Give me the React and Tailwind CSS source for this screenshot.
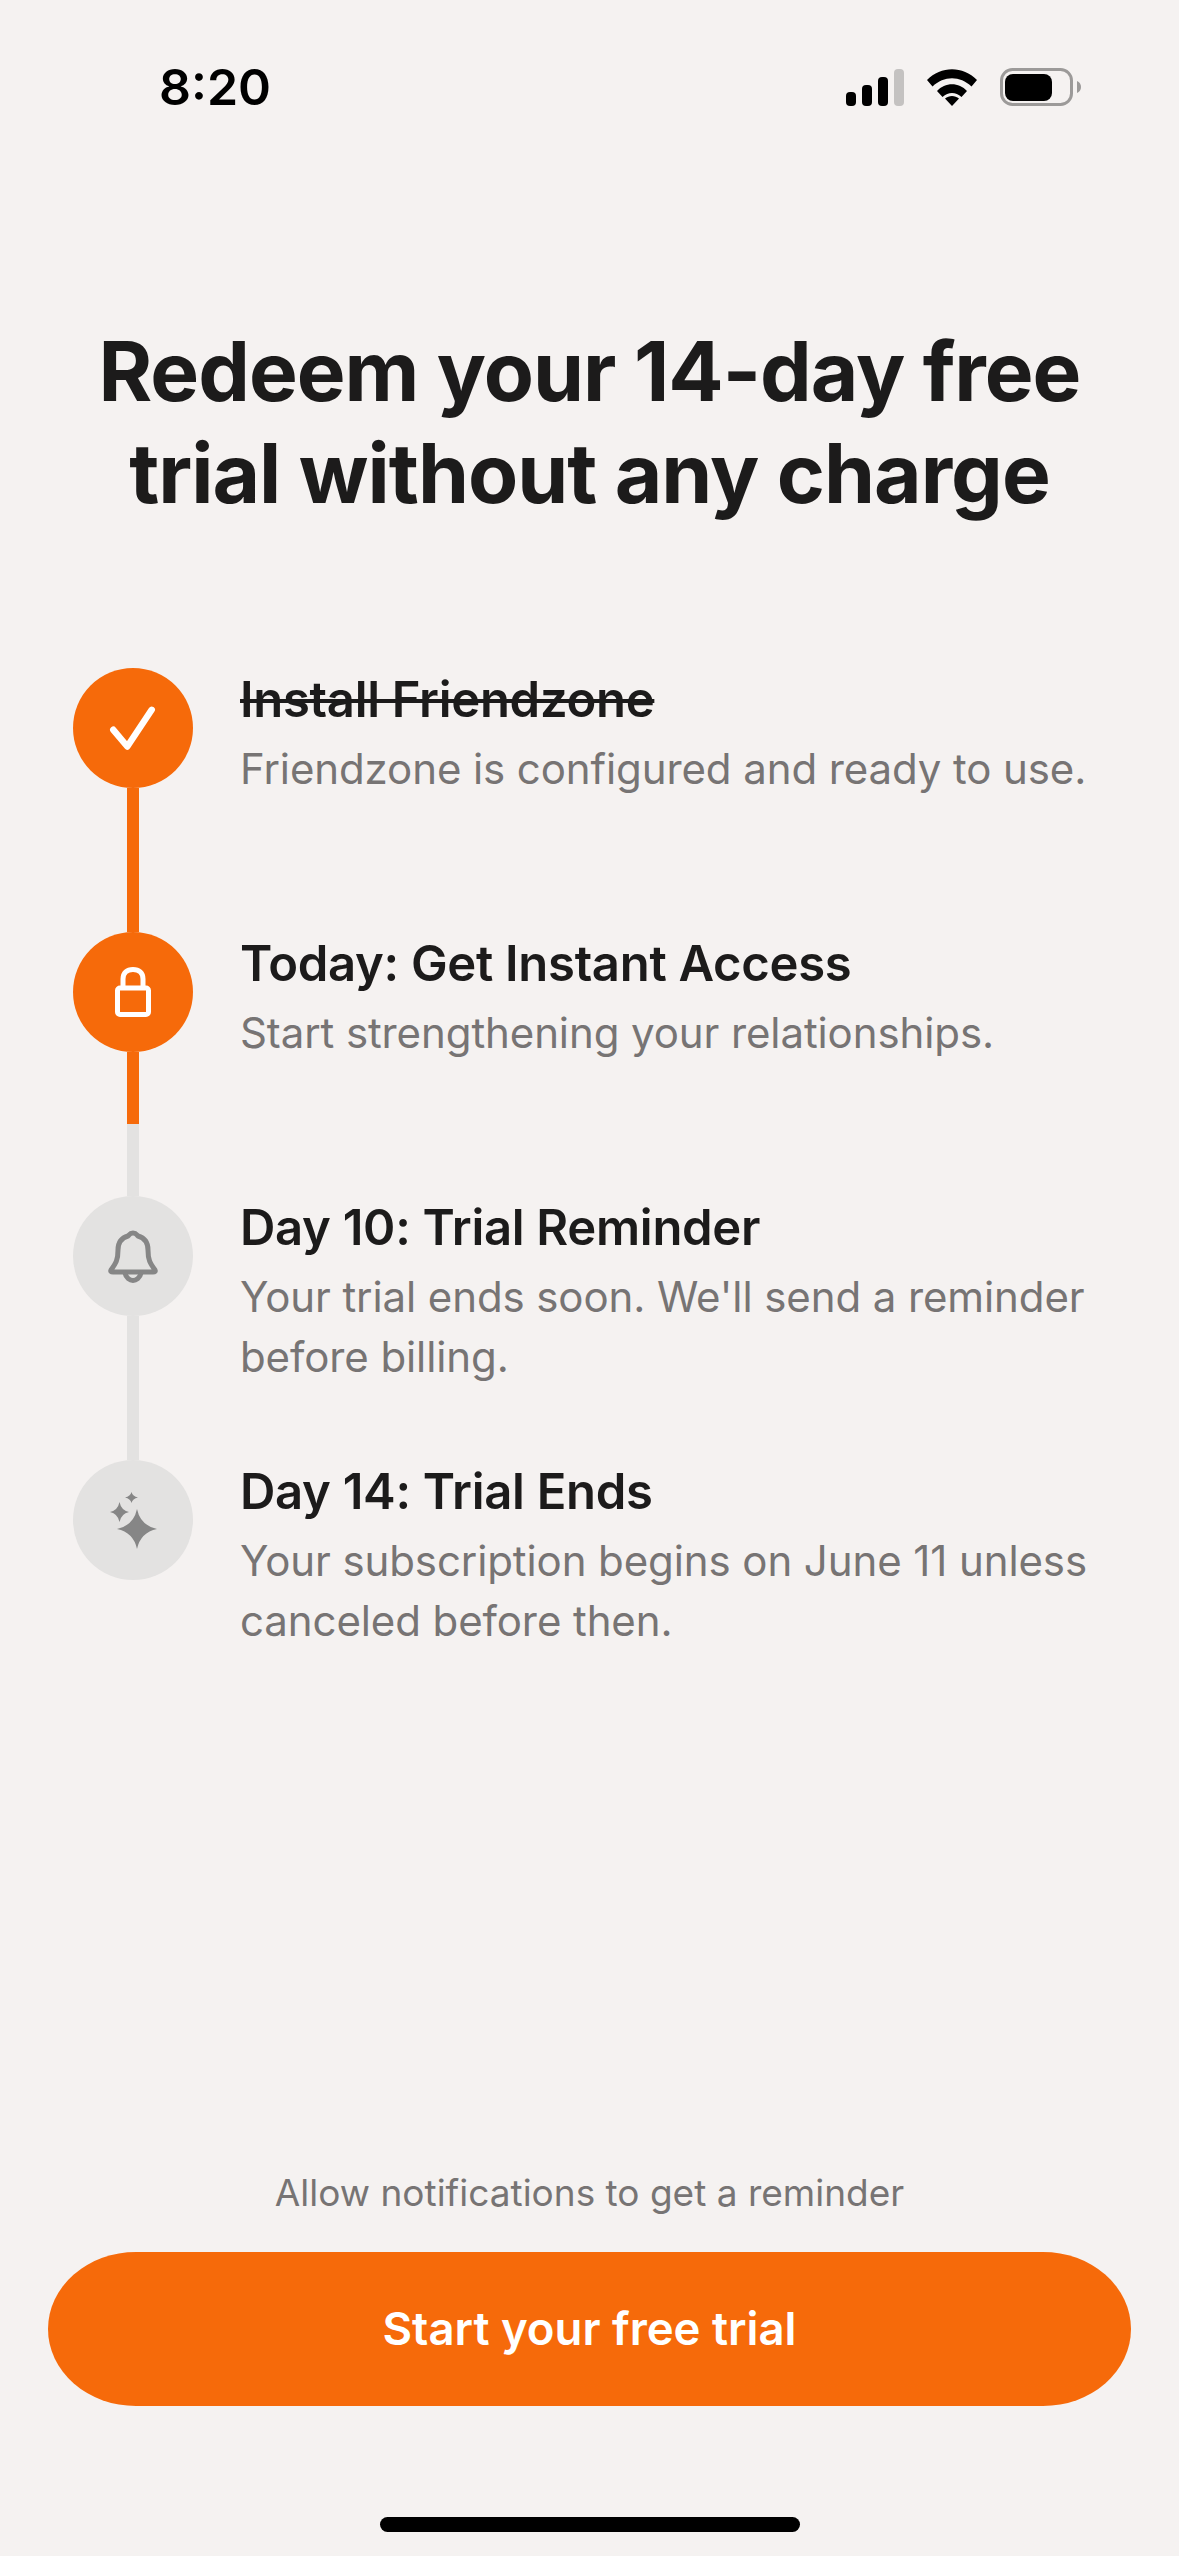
const font = { fontFamily: "Inter, 'Noto Sans', sans-serif" };

function Signal() {
  return (
    <svg width="58" height="37" viewBox="0 0 58 37">
      <rect x="0" y="23" width="10" height="14" rx="4" fill="#000" />
      <rect x="16" y="16" width="10" height="21" rx="4" fill="#000" />
      <rect x="32" y="8" width="10" height="29" rx="4" fill="#000" />
      <rect x="48" y="0" width="10" height="37" rx="4" fill="#c4c2c1" />
    </svg>
  );
}

function Wifi() {
  return (
    <svg width="50" height="37" viewBox="0 0 50 37">
      <path d="M0 11 C14 -3.5 36 -3.5 50 11 L44.5 17.5 C33 6.5 17 6.5 5.5 17.5 Z" fill="#000" />
      <path d="M10 22 C18 13 32 13 40 22 L34.5 28 C28.5 22.5 21.5 22.5 15.5 28 Z" fill="#000" />
      <path d="M18 29.5 C22 26 28 26 32 29.5 L25 37 Z" fill="#000" />
    </svg>
  );
}

function Battery() {
  return (
    <svg width="81" height="38" viewBox="0 0 81 38">
      <rect x="1.5" y="1.5" width="70" height="35" rx="11" fill="none" stroke="#9c9a99" strokeWidth="3" />
      <rect x="5" y="6" width="47" height="27" rx="8" fill="#000" />
      <path d="M77 13 C79.5 14 81 16 81 19 C81 22 79.5 24 77 25 Z" fill="#9c9a99" />
    </svg>
  );
}

function Check() {
  return (
    <svg width="48" height="48" viewBox="0 0 48 48" fill="none" stroke="#fff" strokeWidth="6.5" strokeLinecap="round" strokeLinejoin="round">
      <path d="M4.3 25.8 L18.3 42.5 L42.7 5.8" />
    </svg>
  );
}

function Lock() {
  return (
    <svg width="36" height="50" viewBox="0 0 36 50" fill="none" stroke="#fff" strokeWidth="5" strokeLinejoin="round">
      <rect x="2.5" y="21" width="31" height="26.5" rx="2.5" />
      <path d="M8 21 V12 C8 5.5 12 2.5 18 2.5 C24 2.5 28 5.5 28 12 V21" />
    </svg>
  );
}

function Bell() {
  return (
    <svg width="50" height="53" viewBox="0 0 50 53" fill="none" stroke="#868686" strokeWidth="5" strokeLinejoin="round" strokeLinecap="round">
      <path d="M25 3 C28 3 29 5 30 6 C37 8 40 13 40 20 C40 30 42 33 47 40 Q48 42 45 42 H5 Q2 42 3 40 C8 33 10 30 10 20 C10 13 13 8 20 6 C21 5 22 3 25 3 Z" />
      <path d="M17 43 C18 48 22 50.5 25 50.5 C28 50.5 32 48 33 43" />
    </svg>
  );
}

function Sparkles() {
  return (
    <svg width="47" height="57" viewBox="0 0 47 57" fill="#868686">
      <path d="M27 17 Q30.5 33.5 47 37 Q30.5 40.5 27 57 Q23.5 40.5 7 37 Q23.5 33.5 27 17 Z" />
      <path d="M9.5 10 Q11.2 18.3 19 20 Q11.2 21.7 9.5 30 Q7.8 21.7 0 20 Q7.8 18.3 9.5 10 Z" />
      <path d="M21.5 0 Q22.6 4.4 28 5.5 Q22.6 6.6 21.5 11 Q20.4 6.6 15 5.5 Q20.4 4.4 21.5 0 Z" />
    </svg>
  );
}

const steps = [
  { title: "Install Friendzone", desc: "Friendzone is configured and ready to use.", done: true, active: true, icon: <Check />, line: "full" },
  { title: "Today: Get Instant Access", desc: "Start strengthening your relationships.", active: true, icon: <Lock />, line: "half" },
  { title: "Day 10: Trial Reminder", desc: "Your trial ends soon. We'll send a reminder before billing.", icon: <Bell />, line: "grey" },
  { title: "Day 14: Trial Ends", desc: "Your subscription begins on June 11 unless canceled before then.", icon: <Sparkles /> },
];

function Step({ s }) {
  return (
    <div className="flex h-[264px] items-stretch">
      <div className="flex w-[120px] shrink-0 flex-col items-center">
        <div className={`flex h-[120px] w-[120px] shrink-0 items-center justify-center rounded-full ${s.active ? "bg-[#f66a0a]" : "bg-[#e3e2e1]"}`}>
          {s.icon}
        </div>
        {s.line === "full" && <div className="w-[12px] flex-1 bg-[#f66a0a]" />}
        {s.line === "half" && (
          <div className="flex w-[12px] flex-1 flex-col">
            <div className="h-[72px] bg-[#f66a0a]" />
            <div className="flex-1 bg-[#e3e2e1]" />
          </div>
        )}
        {s.line === "grey" && <div className="w-[12px] flex-1 bg-[#e3e2e1]" />}
      </div>
      <div className="ml-[47px] flex-1 pt-[2px]">
        <div className={`text-[49px] leading-[60px] font-semibold text-[#1c1b1b] tracking-[-0.3px] ${s.done ? "line-through" : ""}`}>{s.title}</div>
        <div className="mt-[9px] text-[42px] leading-[60px] text-[#777474] tracking-[-0.1px]">{s.desc}</div>
      </div>
    </div>
  );
}

export default function App() {
  return (
    <div style={font} className="flex h-[2556px] w-[1179px] flex-col overflow-hidden bg-[#f5f2f1]">
      <div className="flex h-[116px] items-end justify-between pl-[159px] pr-[98px]">
        <span className="text-[50px] leading-[58px] font-semibold text-black">8:20</span>
        <div className="mb-[10px] flex items-end gap-[23px]">
          <Signal />
          <Wifi />
          <Battery />
        </div>
      </div>
      <h1 className="mt-[205px] px-[40px] text-center text-[82px] leading-[102px] font-bold text-[#1c1b1b] tracking-[-1px]">
        Redeem your 14-day free
        <br />
        trial without any charge
      </h1>
      <div className="mt-[143px] pl-[73px] pr-[70px]">
        {steps.map((s) => (
          <Step key={s.title} s={s} />
        ))}
      </div>
      <div className="mt-auto flex flex-col items-center">
        <div className="text-[37px] leading-[48px] text-[#777474]">Allow notifications to get a reminder</div>
        <div className="mx-[48px] mt-[35px] flex h-[154px] w-[1083px] items-center justify-center rounded-[88px/77px] bg-[#f66a0a] text-[45.5px] font-semibold text-white">
          Start your free trial
        </div>
        <div className="mt-[111px] mb-[24px] h-[15px] w-[420px] rounded-full bg-black" />
      </div>
    </div>
  );
}
